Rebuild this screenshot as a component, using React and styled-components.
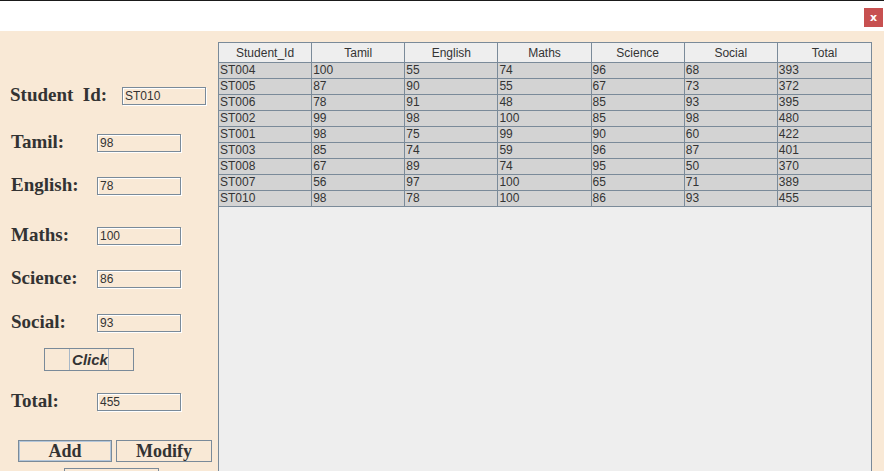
import React from "react";
import styled, { createGlobalStyle } from "styled-components";

const Global = createGlobalStyle`
  html, body { margin: 0; padding: 0; background: #ffffff; }
  #root { width: 884px; height: 471px; overflow: hidden; }
`;

const BEIGE = "#f9e9d6";
const LINE = "#7a8a99";
const INK = "#333333";

const Window = styled.div`
  width: 884px;
  height: 471px;
  display: flex;
  flex-direction: column;
  overflow: hidden;
`;

const TitleBar = styled.div`
  height: 31px;
  box-sizing: border-box;
  border-top: 1px solid #1a1a1a;
  background: #ffffff;
  display: flex;
  justify-content: flex-end;
  align-items: flex-start;
  padding: 7px 1px 0 0;
  flex: none;
`;

const CloseBtn = styled.div`
  width: 19px;
  height: 19px;
  background: #c75050;
  color: #ffffff;
  font: bold 11px "DejaVu Sans", sans-serif;
  display: flex;
  align-items: center;
  justify-content: center;
  line-height: 1;
`;

const Body = styled.div`
  flex: 1;
  display: flex;
  background: ${BEIGE};
  min-height: 0;
`;

const Form = styled.div`
  width: 218px;
  flex: none;
  display: flex;
  flex-direction: column;
`;

const Row = styled.div`
  display: flex;
  align-items: flex-start;
  margin-top: ${(p) => p.$gap}px;
  padding-left: ${(p) => p.$indent}px;
  height: 19px;
  flex: none;
`;

const Label = styled.div`
  width: ${(p) => p.$w}px;
  margin-top: -2px;
  font: bold 19px "Liberation Serif", "Times New Roman", serif;
  line-height: 19px;
  color: ${INK};
  white-space: pre;
`;

const Field = styled.div`
  width: 84px;
  height: 18px;
  box-sizing: border-box;
  border: 1px solid ${LINE};
  box-shadow: 1px 1px 0 #ffffff, inset 1px 1px 0 #ffffff;
  padding: 1px 0 0 2px;
  font: 12px "Liberation Sans", Arial, sans-serif;
  line-height: 15px;
  color: ${INK};
`;

const ClickRow = styled.div`
  margin-top: ${(p) => p.$gap}px;
  padding-left: 44px;
  display: flex;
  flex: none;
`;

const ClickButton = styled.div`
  width: 90px;
  height: 23px;
  box-sizing: border-box;
  border: 1px solid ${LINE};
  display: flex;
  justify-content: center;
  align-items: stretch;
`;

const FocusText = styled.span`
  width: 40px;
  box-sizing: border-box;
  border: 1px solid #a8b8c8;
  border-top: none;
  border-bottom: none;
  overflow: hidden;
  white-space: nowrap;
  display: flex;
  align-items: center;
  justify-content: center;
  font: italic bold 15px "Liberation Sans", Arial, sans-serif;
  color: ${INK};
  padding-left: 2px;
`;

const ButtonRow = styled.div`
  margin-top: ${(p) => p.$gap}px;
  padding-left: ${(p) => p.$indent}px;
  display: flex;
  gap: 4px;
  flex: none;
`;

const Button = styled.div`
  width: ${(p) => p.$w}px;
  height: 22px;
  box-sizing: border-box;
  border: 1px solid ${LINE};
  box-shadow: ${(p) => (p.$focus ? "inset 0 0 0 1px #b3c6da" : "none")};
  display: flex;
  align-items: center;
  justify-content: center;
  font: bold 18px "Liberation Serif", "Times New Roman", serif;
  color: ${INK};
  line-height: 1;
`;

const TablePane = styled.div`
  margin-top: 11px;
  width: 654px;
  box-sizing: border-box;
  border: 1px solid ${LINE};
  border-bottom: none;
  background: #eeeeee;
  align-self: stretch;
  display: flex;
  flex-direction: column;
  flex: none;
`;

const Grid = styled.div`
  display: grid;
  grid-template-columns: repeat(7, 1fr);
`;

const HeadCell = styled.div`
  height: 20px;
  box-sizing: border-box;
  background: #eeeeee;
  border-bottom: 1px solid ${LINE};
  border-right: ${(p) => (p.$last ? "none" : `1px solid ${LINE}`)};
  text-align: center;
  padding-top: 2px;
  font: 12px "Liberation Sans", Arial, sans-serif;
  line-height: 17px;
  color: ${INK};
`;

const Cell = styled.div`
  height: 16px;
  box-sizing: border-box;
  background: #d3d3d3;
  border-bottom: 1px solid ${LINE};
  border-right: ${(p) => (p.$last ? "none" : `1px solid ${LINE}`)};
  padding-left: 1px;
  font: 12px "Liberation Sans", Arial, sans-serif;
  line-height: 15px;
  color: ${INK};
  white-space: nowrap;
  overflow: hidden;
`;

const headers = ["Student_Id", "Tamil", "English", "Maths", "Science", "Social", "Total"];
const rows = [
  ["ST004", "100", "55", "74", "96", "68", "393"],
  ["ST005", "87", "90", "55", "67", "73", "372"],
  ["ST006", "78", "91", "48", "85", "93", "395"],
  ["ST002", "99", "98", "100", "85", "98", "480"],
  ["ST001", "98", "75", "99", "90", "60", "422"],
  ["ST003", "85", "74", "59", "96", "87", "401"],
  ["ST008", "67", "89", "74", "95", "50", "370"],
  ["ST007", "56", "97", "100", "65", "71", "389"],
  ["ST010", "98", "78", "100", "86", "93", "455"],
];

const fields = [
  { label: "Tamil:", value: "98", gap: 28 },
  { label: "English:", value: "78", gap: 24 },
  { label: "Maths:", value: "100", gap: 31 },
  { label: "Science:", value: "86", gap: 24 },
  { label: "Social:", value: "93", gap: 25 },
];

export default function App() {
  return (
    <Window>
      <Global />
      <TitleBar>
        <CloseBtn>x</CloseBtn>
      </TitleBar>
      <Body>
        <Form>
          <Row $gap={56} $indent={10}>
            <Label $w={112}>{"Student  Id:"}</Label>
            <Field>ST010</Field>
          </Row>
          {fields.map((f) => (
            <Row key={f.label} $gap={f.gap} $indent={11}>
              <Label $w={86}>{f.label}</Label>
              <Field>{f.value}</Field>
            </Row>
          ))}
          <ClickRow $gap={15}>
            <ClickButton>
              <FocusText>Click</FocusText>
            </ClickButton>
          </ClickRow>
          <Row $gap={22} $indent={11}>
            <Label $w={86}>Total:</Label>
            <Field>455</Field>
          </Row>
          <ButtonRow $gap={28} $indent={18}>
            <Button $w={94} $focus>Add</Button>
            <Button $w={96}>Modify</Button>
          </ButtonRow>
          <ButtonRow $gap={6} $indent={64}>
            <Button $w={95} />
          </ButtonRow>
        </Form>
        <TablePane>
          <Grid>
            {headers.map((h, i) => (
              <HeadCell key={h} $last={i === 6}>{h}</HeadCell>
            ))}
            {rows.map((r) =>
              r.map((c, i) => (
                <Cell key={r[0] + i} $last={i === 6}>{c}</Cell>
              ))
            )}
          </Grid>
        </TablePane>
      </Body>
    </Window>
  );
}
